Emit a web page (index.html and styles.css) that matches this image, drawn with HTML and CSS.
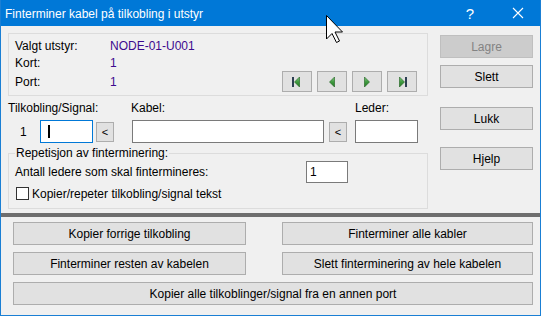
FILE: index.html
```html
<!DOCTYPE html>
<html lang="no">
<head>
    <meta charset="UTF-8">
    <title>Finterminer kabel</title>
    <link rel="stylesheet" href="styles.css">
</head>
<body>
    <div class="window">
        <div class="titlebar">
            <span class="title">Finterminer kabel på tilkobling i utstyr</span>
            <span class="help">?</span>
            <svg class="close" width="12" height="12" viewBox="0 0 12 12">
                <path d="M1 1 L11 11 M11 1 L1 11" stroke="#fff" stroke-width="1.1" fill="none"/>
            </svg>
        </div>

        <div class="client">
            <div class="upper">
                <div class="main-col">
                    <div class="info-box">
                        <span class="lbl">Valgt utstyr:</span>
                        <span class="val">NODE-01-U001</span>
                        <span class="lbl">Kort:</span>
                        <span class="val">1</span>
                        <span class="lbl">Port:</span>
                        <span class="val">1</span>
                        <div class="nav">
                            <button class="btn nav-btn">
                                <svg width="12" height="12" viewBox="0 0 12 12">
                                    <rect x="1" y="1" width="2" height="10" fill="#2d3f52"/>
                                    <polygon points="3.5,6 8.5,1 8.5,11" fill="url(#g)" stroke="#1d5e1d" stroke-width="0.6"/>
                                </svg>
                            </button>
                            <button class="btn nav-btn">
                                <svg width="12" height="12" viewBox="0 0 12 12">
                                    <polygon points="3.5,6 8.5,1 8.5,11" fill="url(#g)" stroke="#1d5e1d" stroke-width="0.6"/>
                                </svg>
                            </button>
                            <button class="btn nav-btn">
                                <svg width="12" height="12" viewBox="0 0 12 12">
                                    <polygon points="8.5,6 3.5,1 3.5,11" fill="url(#g)" stroke="#1d5e1d" stroke-width="0.6"/>
                                </svg>
                            </button>
                            <button class="btn nav-btn">
                                <svg width="12" height="12" viewBox="0 0 12 12">
                                    <polygon points="8.5,6 3.5,1 3.5,11" fill="url(#g)" stroke="#1d5e1d" stroke-width="0.6"/>
                                    <rect x="9" y="1" width="2" height="10" fill="#2d3f52"/>
                                </svg>
                            </button>
                        </div>
                    </div>

                    <div class="field-labels">
                        <span class="fl-signal">Tilkobling/Signal:</span>
                        <span class="fl-kabel">Kabel:</span>
                        <span>Leder:</span>
                    </div>

                    <div class="field-row">
                        <span class="row-no">1</span>
                        <div class="textbox tb-signal focused"><span class="caret"></span></div>
                        <button class="btn pick-btn">&lt;</button>
                        <div class="textbox tb-kabel"></div>
                        <button class="btn pick-btn pick-kabel">&lt;</button>
                        <div class="textbox tb-leder"></div>
                    </div>

                    <fieldset class="repeat">
                        <legend>Repetisjon av finterminering:</legend>
                        <div class="repeat-row">
                            <span>Antall ledere som skal fintermineres:</span>
                            <div class="textbox tb-count">1</div>
                        </div>
                        <div class="check-row">
                            <span class="checkbox"></span>
                            <span>Kopier/repeter tilkobling/signal tekst</span>
                        </div>
                    </fieldset>
                </div>

                <div class="side-col">
                    <button class="btn side-btn disabled">Lagre</button>
                    <button class="btn side-btn btn-slett">Slett</button>
                    <button class="btn side-btn btn-lukk">Lukk</button>
                    <button class="btn side-btn btn-hjelp">Hjelp</button>
                </div>
            </div>

            <div class="separator"></div>

            <div class="actions">
                <button class="btn">Kopier forrige tilkobling</button>
                <button class="btn">Finterminer alle kabler</button>
                <button class="btn">Finterminer resten av kabelen</button>
                <button class="btn">Slett finterminering av hele kabelen</button>
                <button class="btn wide">Kopier alle tilkoblinger/signal fra en annen port</button>
            </div>
        </div>

        <!-- mouse pointer over the title bar -->
        <svg class="cursor" width="18" height="29" viewBox="0 0 18 29">
            <polygon points="0.5,0.5 0.5,24 6,18.5 10.5,27.5 13.5,26 9,17 16.5,17" fill="#fff" stroke="#000" stroke-width="1"/>
        </svg>

        <svg width="0" height="0" class="defs">
            <defs>
                <linearGradient id="g" x1="0" y1="0" x2="0" y2="1">
                    <stop offset="0" stop-color="#7fc77f"/>
                    <stop offset="0.5" stop-color="#3f9a3f"/>
                    <stop offset="1" stop-color="#237a23"/>
                </linearGradient>
            </defs>
        </svg>
    </div>
</body>
</html>
```

FILE: styles.css
```css
body {
    margin: 0;
    padding: 0;
    font-family: "Liberation Sans", Arial, sans-serif;
    font-size: 12px;
    color: #000;
    background: #f0f0f0;
}
.window {
    position: relative;
    width: 541px;
    height: 316px;
    box-sizing: border-box;
    border: 1px solid #1a7fd4;
    border-top: none;
    background: #f0f0f0;
    overflow: hidden;
}
.titlebar {
    display: flex;
    align-items: center;
    height: 26px;
    margin: 0 -1px;
    padding-left: 5px;
    background: #0078d7;
    color: #fff;
}
.title {
    flex: 1;
    padding-top: 1px;
}
.help {
    font-size: 15px;
    margin-right: 38px;
}
.close {
    margin-right: 17px;
}
.client {
    display: flex;
    flex-direction: column;
}
.upper {
    display: flex;
    padding-left: 7px;
}
.main-col {
    width: 420px;
}
.side-col {
    display: flex;
    flex-direction: column;
    width: 93px;
    margin-left: 12px;
}

/* buttons */
.btn {
    font-family: inherit;
    font-size: 12px;
    color: #000;
    background: #e1e1e1;
    border: 1px solid #adadad;
    padding: 0;
    height: 23px;
    box-sizing: border-box;
}
.btn.disabled {
    background: #cccccc;
    border-color: #bfbfbf;
    color: #838383;
}
.side-btn {
    width: 93px;
}
.side-btn.disabled {
    margin-top: 9px;
}
.btn-slett {
    margin-top: 7px;
}
.btn-lukk {
    margin-top: 19px;
}
.btn-hjelp {
    margin-top: 17px;
}

/* top info box */
.info-box {
    display: grid;
    grid-template-columns: 95px 1fr auto;
    grid-template-rows: 17px 17px 21px;
    align-items: center;
    height: 63px;
    margin-top: 7px;
    padding: 3px 10px 3px 6px;
    box-sizing: border-box;
    border: 1px solid #dcdcdc;
}
.lbl {
    grid-column: 1;
}
.val {
    grid-column: 2;
    color: #3d0a8f;
}
.nav {
    grid-column: 3;
    grid-row: 3;
    display: flex;
    gap: 5px;
}
.nav-btn {
    width: 30px;
    height: 21px;
    display: flex;
    align-items: center;
    justify-content: center;
}

/* fields */
.field-labels {
    display: flex;
    margin-top: 4px;
    line-height: 16px;
}
.fl-signal {
    width: 123px;
}
.fl-kabel {
    width: 224px;
}
.field-row {
    display: flex;
    align-items: center;
    margin-top: 4px;
    height: 23px;
}
.row-no {
    width: 20px;
    margin-left: 12px;
}
.textbox {
    height: 23px;
    box-sizing: border-box;
    border: 1px solid #7a7a7a;
    background: #fff;
    padding-left: 3px;
    line-height: 21px;
}
.textbox.focused {
    border-color: #0078d7;
    display: flex;
    align-items: center;
}
.caret {
    width: 2px;
    height: 13px;
    margin-left: 4px;
    background: #000;
}
.tb-signal {
    width: 53px;
}
.tb-kabel {
    width: 192px;
    margin-left: 18px;
}
.tb-leder {
    width: 63px;
    margin-left: 8px;
}
.pick-btn {
    width: 18px;
    height: 20px;
    margin-left: 3px;
    font-size: 11px;
}
.pick-btn.pick-kabel {
    margin-left: 5px;
}

/* repetition group */
.repeat {
    margin: 2px 0 0 0;
    padding: 0 0 7px 6px;
    border: 1px solid #dcdcdc;
    height: 64px;
    box-sizing: border-box;
}
.repeat legend {
    padding: 0 1px;
    line-height: 16px;
}
.repeat-row {
    display: flex;
    align-items: center;
    height: 22px;
    padding-right: 79px;
}
.tb-count {
    width: 42px;
    height: 22px;
    line-height: 20px;
    margin-left: auto;
}
.check-row {
    display: flex;
    align-items: center;
    gap: 3px;
    margin-top: 4px;
    height: 13px;
    padding-left: 1px;
}
.checkbox {
    width: 13px;
    height: 13px;
    box-sizing: border-box;
    border: 1px solid #333;
    background: #fff;
}

.separator {
    height: 4px;
    margin-top: 4px;
    background: #6e6e6e;
}

.actions {
    display: grid;
    grid-template-columns: 233px 251px;
    column-gap: 36px;
    row-gap: 7px;
    margin-top: 5px;
    padding: 0 7px 0 12px;
}
.actions .wide {
    grid-column: 1 / 3;
}

.cursor {
    position: absolute;
    left: 325px;
    top: 15px;
}
.defs {
    position: absolute;
}
```
